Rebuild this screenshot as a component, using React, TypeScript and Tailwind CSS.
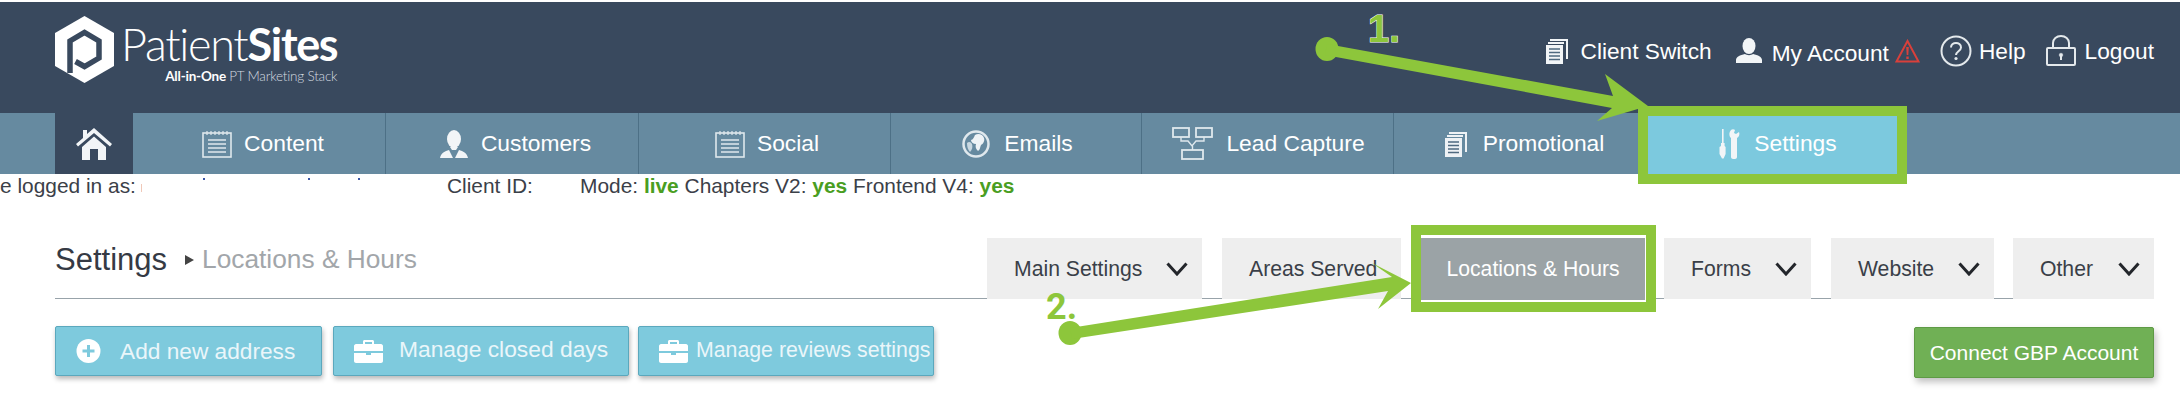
import React from "react";

const font = "font-['Liberation_Sans',Arial,sans-serif]";

function Notes() {
  return (
    <svg width="30" height="28" viewBox="0 0 30 28" fill="none" stroke="#dfe8ed" strokeWidth="1.6">
      <rect x="1" y="3" width="28" height="24" />
      <path d="M5 1v4M9 1v4M13 1v4M17 1v4M21 1v4M25 1v4" strokeWidth="1.2" />
      <path d="M6 10h18M6 14h18M6 18h18M6 22h18" />
    </svg>
  );
}
function Person({ w = 28, h = 28 }: { w?: number; h?: number }) {
  return (
    <svg width={w} height={h} viewBox="0 0 28 28" fill="#f2f5f7">
      <ellipse cx="14" cy="9" rx="7" ry="9" />
      <path d="M10 17h8l-2 3h-4z" />
      <path d="M0 28c1-5 5-7 9-8l4 8zM28 28c-1-5-5-7-9-8l-4 8z" />
    </svg>
  );
}
function UserSolid() {
  return (
    <svg width="26" height="25" viewBox="0 0 26 25" fill="#f2f5f7">
      <ellipse cx="13" cy="8" rx="6.500" ry="8" />
      <path d="M0 25v-3c0-3 4-5 9-6 2 1.500 6 1.500 8 0 5 1 9 3 9 6v3z" />
    </svg>
  );
}
function Home() {
  return (
    <svg width="36" height="32" viewBox="0 0 36 32" fill="#f2f5f7">
      <path d="M7 2h4v4l7-6 18 16-2 2.500L18 5 2 18.500 0 16l7-6z" />
      <path d="M6 19 18 8.500 30 19v13h-8V21h-8v11H6z" />
    </svg>
  );
}
function Globe() {
  return (
    <svg width="28" height="28" viewBox="0 0 28 28">
      <circle cx="14" cy="14" r="12.500" fill="none" stroke="#dfe8ed" strokeWidth="2.500" />
      <path d="M13 5c3-2 8-1 9 3 1 3-1 6-3 7-1 2-1 5-3 6-2-2-3-4-2-7-3 0-5-2-5-4 2 0 3-3 4-5z" fill="#eef3f6" />
      <path d="M5 13c2-2 4-1 5 1 1 3 0 6-2 8-2-2-3-5-3-9z" fill="#c9d8e1" />
    </svg>
  );
}
function Flow() {
  return (
    <svg width="41" height="33" viewBox="0 0 41 33" fill="none" stroke="#dfe8ed" strokeWidth="1.800">
      <rect x="1" y="1" width="16" height="9" />
      <rect x="24" y="1" width="16" height="9" />
      <rect x="10" y="23" width="21" height="9" />
      <path d="M9 10v4h7l4 5 4-5h8v-4M20.500 19v4" strokeWidth="1.400" />
    </svg>
  );
}
function Docs({ w = 24, h = 26, c = "#f2f5f7" }: { w?: number; h?: number; c?: string }) {
  return (
    <svg width={w} height={h} viewBox="0 0 24 26" fill="none">
      <path d="M5 1h18v20h-2V3H5z" fill={c} />
      <path d="M3 4h16v2H3z" fill={c} />
      <rect x="1" y="7" width="17" height="19" fill={c} />
      <path d="M4 11h11M4 14.500h11M4 18h11M4 21.500h11" stroke="#4f6a80" strokeWidth="1.300" />
    </svg>
  );
}
function Tools() {
  return (
    <svg width="22" height="30" viewBox="0 0 22 30" fill="#f2f5f7">
      <path d="M4 0h1.600v14H4z" />
      <path d="M3 14h3.600v3l1 1v7l-2 4.500H4l-2.500-4.500v-7l1.500-1z" />
      <path d="M13 1c-2 2-2 5-1 7l1 1v19c0 1 1 2 2 2h2c1 0 2-1 2-2V9c2-1 3-4 2-6l-3 2-2-1 1-3c-1-1-3-1-4 0z" />
    </svg>
  );
}
function Alert() {
  return (
    <svg width="25" height="24" viewBox="0 0 25 24" fill="none">
      <path d="M12.500 2 23.500 22.500H1.500z" stroke="#d9403b" strokeWidth="2" />
      <path d="M11.200 8h2.600l-.5 8h-1.600zM11.300 17.500h2.400V20h-2.400z" fill="#d9403b" />
    </svg>
  );
}
function Help() {
  return (
    <svg width="32" height="32" viewBox="0 0 32 32" fill="none">
      <circle cx="16" cy="16" r="14.500" stroke="#e4e9ec" strokeWidth="2" />
      <path d="M11 12.500c0-3 2.500-4.500 5-4.500s5 1.500 5 4.500c0 3.500-5 4-5 7.500" stroke="#e4e9ec" strokeWidth="2" />
      <circle cx="16" cy="23.500" r="1.600" fill="#e4e9ec" />
    </svg>
  );
}
function Lock() {
  return (
    <svg width="30" height="31" viewBox="0 0 30 31" fill="none" stroke="#e4e9ec" strokeWidth="2">
      <rect x="1" y="13" width="28" height="17" rx="1" />
      <path d="M7 13V8c0-4 3.500-7 8-7s8 3 8 7v5" />
      <circle cx="15" cy="20" r="1.800" fill="#e4e9ec" strokeWidth="0.500" />
      <path d="M15 21v4" />
    </svg>
  );
}
function Plus() {
  return (
    <svg width="25" height="24" viewBox="0 0 25 24">
      <circle cx="12.500" cy="12" r="12" fill="#fff" />
      <path d="M12.500 6v12M6.500 12h12" stroke="#7ecadd" strokeWidth="3" />
    </svg>
  );
}
function Case() {
  return (
    <svg width="29" height="23" viewBox="0 0 29 23" fill="#fff">
      <path d="M9 4V1.500C9 .7 9.700 0 10.500 0h8c.8 0 1.500.7 1.500 1.500V4h-2V2h-7v2z" />
      <path d="M0 6c0-1 1-2 2-2h25c1 0 2 1 2 2v5H0zM0 13h12v2h5v-2h12v8c0 1-1 2-2 2H2c-1 0-2-1-2-2z" />
    </svg>
  );
}
function Chevron() {
  return (
    <svg width="22" height="14" viewBox="0 0 22 14" fill="none">
      <path d="M1.500 1.500 11 12l9.500-10.500" stroke="#23262b" strokeWidth="3" />
    </svg>
  );
}
function Logo() {
  return (
    <svg width="59" height="67" viewBox="0 0 59 67">
      <path d="M29.500 0 59 17v33L29.500 67 0 50V17z" fill="#fff" />
      <path d="M15 57V25l14.500-8.500L44 25v17l-14.500 8.500-9-5" fill="none" stroke="#39495e" strokeWidth="5.500" />
      <path d="M29.500 21.500 39 27v13l-9.500 5.500L20 40V27z" fill="#fff" />
    </svg>
  );
}

const navItems = [
  { label: "Content", icon: <Notes />, w: "w-[253px] pl-[8px]", gap: "gap-[12px]" },
  { label: "Customers", icon: <Person />, w: "w-[253px] pl-[7px]", gap: "gap-[13px]" },
  { label: "Social", icon: <Notes />, w: "w-[252px] pl-[5px]", gap: "gap-[12px]" },
  { label: "Emails", icon: <Globe />, w: "w-[251px] pl-[3px]", gap: "gap-[14px]" },
  { label: "Lead Capture", icon: <Flow />, w: "w-[252px] pl-[2px]", gap: "gap-[13px]" },
  { label: "Promotional", icon: <Docs c="#eef2f5" />, w: "w-[254px] pl-[6px]", gap: "gap-[15px]" },
];

const tabs = [
  { label: "Main Settings", cls: "w-[215px]", chevron: true },
  { label: "Areas Served", cls: "w-[179px] ml-[20px]", chevron: false },
  { label: "Forms", cls: "w-[147px] ml-[263px]", chevron: true },
  { label: "Website", cls: "w-[163px] ml-[20px]", chevron: true },
  { label: "Other", cls: "w-[141px] ml-[19px]", chevron: true },
];

export default function App() {
  return (
    <div className={`relative h-[404px] w-[2180px] overflow-hidden bg-white pt-[2px] ${font}`}>
      <header className="flex h-[111px] items-start justify-between bg-[#39495e] pl-[55px] pr-[26px] text-white">
        <div className="mt-[14px] flex">
          <Logo />
          <div className="ml-[7px] flex flex-col items-end">
            <div className="mt-[4px] font-['Lato',sans-serif] text-[45px] leading-[48px] tracking-[-1.300px]">
              <span className="font-light">Patient</span>
              <span className="font-bold">Sites</span>
            </div>
            <div className="mt-[1px] font-['Lato',sans-serif] text-[13.500px] leading-[14px] tracking-[-0.200px] text-[#d5dbe0]">
              <span className="font-bold text-white">All-in-One</span> <span className="font-light">PT Marketing Stack</span>
            </div>
          </div>
        </div>
        <div className="mt-[29px] flex items-center text-[22.700px] leading-[34px]">
          <Docs />
          <span className="ml-[12px]">Client Switch</span>
          <span className="ml-[24px]"><UserSolid /></span>
          <span className="ml-[10px] mt-[5px]">My Account</span>
          <span className="ml-[6px]"><Alert /></span>
          <span className="ml-[20px]"><Help /></span>
          <span className="ml-[7px]">Help</span>
          <span className="ml-[20px]"><Lock /></span>
          <span className="ml-[9px]">Logout</span>
        </div>
      </header>

      <nav className="flex h-[61px] bg-[#668aa0] pl-[55px] text-[22.800px] text-white">
        <div className="flex w-[78px] items-center justify-center bg-[#39495e]">
          <Home />
        </div>
        {navItems.map((n, i) => (
          <div
            key={n.label}
            className={`flex items-center justify-center ${n.w} ${n.gap} ${i < 5 ? "border-r border-[#4d7086]" : ""}`}
          >
            {n.icon}
            <span>{n.label}</span>
          </div>
        ))}
        <div className="relative flex w-[249px] items-center justify-center gap-[14px] bg-[#7cc9de] pl-[10px]">
          <Tools />
          <span>Settings</span>
          <div className="absolute -bottom-[10px] -left-[10px] -right-[10px] -top-[7px] border-[10px] border-[#8dc63b]" />
        </div>
      </nav>

      <div className="relative flex h-[24px] items-center text-[20.900px] leading-[24px] text-[#3b4048]">
        <span className="w-[447px]">e logged in as:</span>
        <span className="w-[133px]">Client ID:</span>
        <span>
          Mode: <b className="text-[#4a9e22]">live</b> Chapters V2: <b className="text-[#4a9e22]">yes</b> Frontend V4:{" "}
          <b className="text-[#4a9e22]">yes</b>
        </span>
        <i className="absolute left-[203px] top-[4px] h-[2px] w-[2px] bg-[#3a55a5]" />
        <i className="absolute left-[308px] top-[4px] h-[2px] w-[2px] bg-[#3a55a5]" />
        <i className="absolute left-[358px] top-[4px] h-[2px] w-[2px] bg-[#3a55a5]" />
        <i className="absolute left-[141px] top-[10px] h-[8px] w-[1px] bg-[#f0c8b8]" />
      </div>

      <main className="ml-[55px] mr-[26px]">
        <div className="mt-[40px] flex h-[61px] items-stretch justify-between border-b border-[#98a3aa]">
          <div className="flex items-center pb-[16px]">
            <span className="text-[31px] leading-[44px] text-[#353a44]">Settings</span>
            <span className="ml-[18px] mr-[8px] h-0 w-0 border-y-[5px] border-l-[9px] border-y-transparent border-l-[#444]" />
            <span className="text-[26.300px] text-[#a2a6aa]">Locations &amp; Hours</span>
          </div>
          <div className="relative -mb-px flex text-[21.200px] text-[#3a3f48]">
            {tabs.map((t) => (
              <div key={t.label} className={`flex items-center justify-between bg-[#eeeeee] pl-[27px] pr-[14px] ${t.cls}`}>
                <span>{t.label}</span>
                {t.chevron && <Chevron />}
              </div>
            ))}
            <div className="absolute -bottom-[13px] left-[424px] top-[-13px] flex w-[245px] border-[10px] border-[#8dc63b] bg-white pt-[3px] pb-[2px] text-white">
              <div className="flex flex-1 items-center justify-center border-r border-white bg-[#9ba3a6]">Locations &amp; Hours</div>
            </div>
          </div>
        </div>

        <div className="mt-[27px] flex items-start justify-between text-[#eaf6fa]">
          <div className="flex">
            <button className="flex h-[50px] w-[267px] items-center whitespace-nowrap rounded-[2px] border border-[#5ba8bd] bg-[#7ecadd] pl-[20px] text-[22.700px] shadow-[1px_3px_5px_rgba(0,0,0,0.28)]">
              <Plus />
              <span className="ml-[19px]">Add new address</span>
            </button>
            <button className="ml-[11px] flex h-[50px] w-[296px] items-center whitespace-nowrap rounded-[2px] border border-[#5ba8bd] bg-[#7ecadd] pl-[20px] text-[22.800px] shadow-[1px_3px_5px_rgba(0,0,0,0.28)]">
              <Case />
              <span className="ml-[16px] -mt-[3px]">Manage closed days</span>
            </button>
            <button className="ml-[9px] flex h-[50px] w-[296px] items-center whitespace-nowrap rounded-[2px] border border-[#5ba8bd] bg-[#7ecadd] pl-[20px] text-[21.300px] shadow-[1px_3px_5px_rgba(0,0,0,0.28)]">
              <Case />
              <span className="ml-[8px]">Manage reviews settings</span>
            </button>
          </div>
          <button className="mt-[1px] h-[51px] w-[240px] whitespace-nowrap rounded-[2px] border border-[#5e9a45] bg-[#70b055] text-[21px] text-white shadow-[2px_4px_7px_rgba(0,0,0,0.25)]">
            Connect GBP Account
          </button>
        </div>
      </main>

      <svg className="pointer-events-none absolute left-0 top-0" width="2180" height="404" fill="#8dc63b">
        <ellipse cx="1327" cy="49" rx="11.500" ry="12" />
        <path d="M1327 44 1613 96 1605 74 1648 106 1597 121 1612 108 1325 55z" />
        <ellipse cx="1070" cy="333" rx="11.500" ry="12" />
        <path d="M1070 328 1392 277 1372 263 1411 283 1378 309 1388 291 1072 339z" />
      </svg>
      <span className="absolute left-[1368px] top-[10px] text-[38px] font-bold leading-[38px] text-[#8dc63b] [-webkit-text-stroke:1px_#ffffff] [paint-order:stroke]">
        1.
      </span>
      <span className="absolute left-[1046px] top-[288px] font-['Roboto',sans-serif] text-[36px] font-bold leading-[38px] text-[#8dc63b]">
        2.
      </span>
    </div>
  );
}
